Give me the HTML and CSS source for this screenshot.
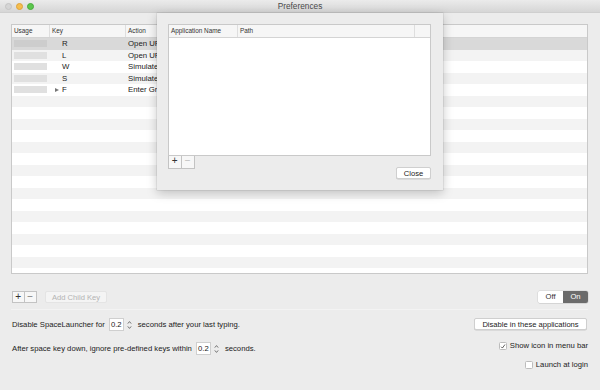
FILE: index.html
```html
<!DOCTYPE html>
<html>
<head>
<meta charset="utf-8">
<link rel="stylesheet" href="styles.css">
</head>
<body>
<div class="window">
  <div class="titlebar">
    <div class="lights">
      <span class="light close"></span>
      <span class="light min"></span>
      <span class="light max"></span>
    </div>
    <div class="title">Preferences</div>
  </div>
  <div class="content">
    <div class="table main-table">
      <div class="thead">
        <div class="th c-usage">Usage</div>
        <div class="th c-key">Key</div>
        <div class="th c-action">Action</div>
      </div>
      <div class="tbody">
        <div class="tr selected"><div class="td c-usage"><span class="bar"></span></div><div class="td c-key"><span class="tri"></span>R</div><div class="td c-action">Open URL</div></div>
        <div class="tr"><div class="td c-usage"><span class="bar"></span></div><div class="td c-key"><span class="tri"></span>L</div><div class="td c-action">Open URL</div></div>
        <div class="tr"><div class="td c-usage"><span class="bar"></span></div><div class="td c-key"><span class="tri"></span>W</div><div class="td c-action">Simulate Keys</div></div>
        <div class="tr"><div class="td c-usage"><span class="bar"></span></div><div class="td c-key"><span class="tri"></span>S</div><div class="td c-action">Simulate Keys</div></div>
        <div class="tr"><div class="td c-usage"><span class="bar"></span></div><div class="td c-key"><span class="tri shown"></span>F</div><div class="td c-action">Enter Group</div></div>
        <div class="tr"></div><div class="tr"></div><div class="tr"></div><div class="tr"></div>
        <div class="tr"></div><div class="tr"></div><div class="tr"></div><div class="tr"></div>
        <div class="tr"></div><div class="tr"></div><div class="tr"></div><div class="tr"></div>
        <div class="tr"></div><div class="tr"></div><div class="tr"></div><div class="tr"></div>
      </div>
    </div>

    <div class="toolbar">
      <div class="pm">
        <span class="pm-btn">+</span><span class="pm-btn minus">−</span>
      </div>
      <span class="btn disabled">Add Child Key</span>
      <span class="spacer"></span>
      <div class="segmented">
        <span class="seg">Off</span><span class="seg on">On</span>
      </div>
    </div>

    <div class="sep"></div>

    <div class="settings">
      <div class="left">
        <div class="line l1">
          <span>Disable SpaceLauncher for</span>
          <span class="field">0.2</span>
          <svg class="stepper" width="5" height="10" viewBox="0 0 5 10"><path d="M0.8 3.6 L2.5 1.6 L4.2 3.6 M0.8 6.4 L2.5 8.4 L4.2 6.4" fill="none" stroke="#555" stroke-width="0.8"/></svg>
          <span>seconds after your last typing.</span>
        </div>
        <div class="line l2">
          <span>After space key down, ignore pre-defined keys within</span>
          <span class="field">0.2</span>
          <svg class="stepper" width="5" height="10" viewBox="0 0 5 10"><path d="M0.8 3.6 L2.5 1.6 L4.2 3.6 M0.8 6.4 L2.5 8.4 L4.2 6.4" fill="none" stroke="#555" stroke-width="0.8"/></svg>
          <span>seconds.</span>
        </div>
      </div>
      <div class="right">
        <span class="btn wide">Disable in these applications</span>
        <label class="check c1"><span class="box"><svg width="7" height="7" viewBox="0 0 7 7"><path d="M1.3 3.8 L2.8 5.3 L5.8 1.2" fill="none" stroke="#333" stroke-width="0.9"/></svg></span>Show icon in menu bar</label>
        <label class="check c2"><span class="box"></span>Launch at login</label>
      </div>
    </div>
  </div>

  <div class="sheet">
    <div class="table sheet-table">
      <div class="thead">
        <div class="th s-name">Application Name</div>
        <div class="th s-path">Path</div>
        <div class="th s-rest"></div>
      </div>
      <div class="sbody"></div>
    </div>
    <div class="pm sheet-pm">
      <span class="pm-btn">+</span><span class="pm-btn minus dis">−</span>
    </div>
    <div class="sheet-foot">
      <span class="btn close-btn">Close</span>
    </div>
  </div>
</div>
</body>
</html>
```

FILE: styles.css
```css
* { box-sizing: border-box; }
html, body { margin: 0; padding: 0; }
body {
  width: 600px;
  height: 390px;
  overflow: hidden;
  font-family: "Liberation Sans", Arial, sans-serif;
  color: #262626;
  background: #ececec;
}
.window {
  position: relative;
  width: 600px;
  height: 390px;
  background: #ececec;
  display: flex;
  flex-direction: column;
}
.titlebar {
  height: 13px;
  flex: none;
  background: linear-gradient(#ebebeb, #d6d6d6);
  border-bottom: 1px solid #cfcfcf;
  position: relative;
  display: flex;
  align-items: center;
  justify-content: center;
}
.lights {
  position: absolute;
  left: 5px;
  top: 3px;
  display: flex;
  gap: 4px;
}
.light {
  width: 7px;
  height: 7px;
  border-radius: 50%;
  display: block;
}
.light.close { background: #d5d5d5; border: 0.5px solid #c4c4c4; }
.light.min { background: #f5be4e; border: 0.5px solid #dea23a; }
.light.max { background: #5cc74d; border: 0.5px solid #48ab3b; }
.title {
  font-size: 8.3px;
  color: #4a4a4a;
  line-height: 13px;
}

.content {
  flex: 1;
  padding: 11px 12px 0 11px;
  display: flex;
  flex-direction: column;
}

.table {
  background: #fff;
  border: 1px solid #c9c9c9;
  overflow: hidden;
}
.main-table {
  height: 250px;
  flex: none;
}
.thead {
  height: 13px;
  display: flex;
  background: #f6f6f6;
  border-bottom: 1px solid #d4d4d4;
}
.th {
  font-size: 6.4px;
  line-height: 12px;
  color: #333;
  padding-left: 2px;
  border-right: 1px solid #dedede;
}
.c-usage { width: 38px; flex: none; }
.c-key { width: 76px; flex: none; }
.c-action { flex: 1; border-right: none; }
.tr {
  height: 11.5px;
  display: flex;
  align-items: center;
}
.tr:nth-child(even) { background: #f3f3f3; }
.tr.selected { background: #d9d9d9; }
.td {
  font-size: 7.8px;
  line-height: 11.5px;
  color: #222;
  display: flex;
  align-items: center;
}
.td.c-usage { padding-left: 2px; }
.bar {
  display: block;
  width: 33px;
  height: 7px;
  background: #e0e0e0;
}
.selected .bar { background: #cdcdcd; }
.td.c-key { padding-left: 5px; }
.tri {
  width: 7px;
  height: 6px;
  flex: none;
}
.tri.shown {
  width: 0;
  height: 0;
  border-left: 4px solid #777;
  border-top: 2.5px solid transparent;
  border-bottom: 2.5px solid transparent;
  margin-right: 3px;
}
.td.c-action { padding-left: 2px; }

.toolbar {
  margin-top: 16px;
  height: 13px;
  display: flex;
  align-items: center;
}
.pm {
  display: flex;
  margin-left: 1px;
}
.pm-btn {
  width: 12.5px;
  height: 12px;
  border: 1px solid #c3c3c3;
  background: #f7f7f7;
  font-size: 10px;
  line-height: 10px;
  text-align: center;
  color: #333;
}
.pm-btn.minus { border-left: none; color: #777; }
.pm-btn.dis { color: #bbb; }
.btn {
  display: inline-block;
  background: #fff;
  border: 0.5px solid #cfcfcf;
  border-radius: 2px;
  box-shadow: 0 0.5px 0.5px rgba(0,0,0,0.15);
  font-size: 7.6px;
  line-height: 11px;
  height: 12px;
  text-align: center;
  color: #222;
}
.btn.disabled {
  margin-left: 8px;
  width: 62px;
  background: #f4f4f4;
  color: #b3b3b3;
  border-color: #e4e4e4;
  box-shadow: none;
}
.spacer { flex: 1; }
.segmented {
  display: flex;
  width: 50px;
  height: 12px;
  border-radius: 2px;
  overflow: hidden;
  box-shadow: 0 0 0 0.5px #cfcfcf, 0 0.5px 0.5px rgba(0,0,0,0.15);
}
.seg {
  flex: 1;
  font-size: 7.6px;
  line-height: 12px;
  text-align: center;
  background: #fff;
  color: #333;
}
.seg.on {
  background: #6b6b6b;
  color: #fff;
}

.sep {
  margin-top: 6px;
  height: 1px;
  background: #e2e2e2;
  border-bottom: 1px solid #f3f3f3;
}

.settings {
  display: flex;
  justify-content: space-between;
  margin-top: 8px;
  font-size: 7.7px;
  color: #222;
}
.left {
  display: flex;
  flex-direction: column;
  gap: 11px;
  padding-left: 1px;
}
.line {
  display: flex;
  align-items: center;
  height: 13px;
}
.field {
  margin-left: 4px;
  width: 15px;
  height: 13px;
  background: #fff;
  border: 0.5px solid #cfcfcf;
  line-height: 12px;
  text-align: center;
}
.stepper { margin-left: 3px; margin-right: 6px; }
.right {
  display: flex;
  flex-direction: column;
  align-items: flex-end;
}
.btn.wide {
  width: 113px;
  margin-right: 1px;
}
.check {
  display: flex;
  align-items: center;
  font-size: 7.7px;
  line-height: 10px;
}
.check.c1 { margin-top: 11px; }
.check.c2 { margin-top: 9px; }
.box {
  width: 8px;
  height: 8px;
  background: #fff;
  border: 0.5px solid #bcbcbc;
  border-radius: 1.5px;
  margin-right: 3px;
  display: flex;
  align-items: center;
  justify-content: center;
}

.sheet {
  position: absolute;
  left: 157px;
  top: 13px;
  width: 286px;
  height: 177px;
  background: #ececec;
  box-shadow: 0 3px 10px rgba(0,0,0,0.22), 0 0 0 0.5px rgba(0,0,0,0.12);
  padding: 11px 12px 0 11px;
  display: flex;
  flex-direction: column;
}
.sheet-table {
  height: 132px;
  flex: none;
}
.s-name { width: 69px; flex: none; }
.s-path { width: 177px; flex: none; }
.s-rest { flex: 1; border-right: none; }
.sheet-pm {
  margin-left: 0;
  margin-top: 0;
}
.sheet-pm .pm-btn { width: 13.5px; height: 13px; border-top: none; }
.sheet-foot {
  display: flex;
  justify-content: flex-end;
  margin-top: -2px;
}
.close-btn {
  width: 35px;
}
```
